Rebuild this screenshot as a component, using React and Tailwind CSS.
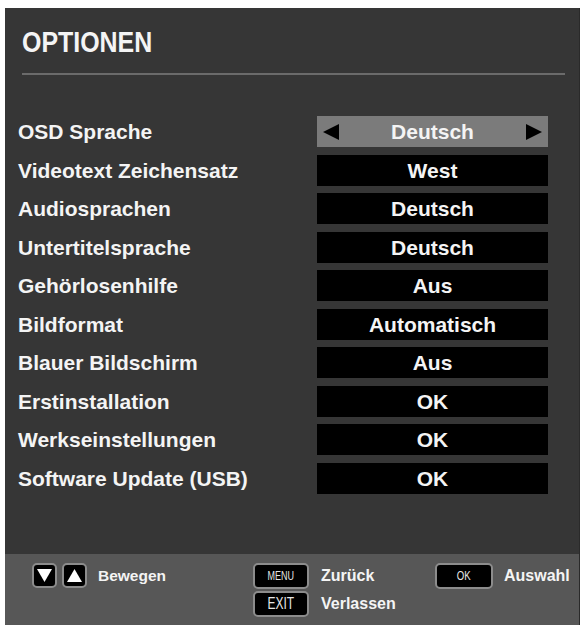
const rows = [
  ['OSD Sprache', 'Deutsch'],
  ['Videotext Zeichensatz', 'West'],
  ['Audiosprachen', 'Deutsch'],
  ['Untertitelsprache', 'Deutsch'],
  ['Gehörlosenhilfe', 'Aus'],
  ['Bildformat', 'Automatisch'],
  ['Blauer Bildschirm', 'Aus'],
  ['Erstinstallation', 'OK'],
  ['Werkseinstellungen', 'OK'],
  ['Software Update (USB)', 'OK'],
]

function Tri({ dir, className }) {
  const pts = {
    left: '16,0 16,16 0,8',
    right: '0,0 16,8 0,16',
    up: '8,1 16,15 0,15',
    down: '0,1 16,1 8,15',
  }[dir]
  return (
    <svg viewBox="0 0 16 16" className={className}>
      <polygon points={pts} fill="currentColor" />
    </svg>
  )
}

function Key({ children, className = '' }) {
  return (
    <div className={`flex items-center justify-center bg-black border-2 border-[#8c8c8c] rounded-[5px] text-[#e6e6e6] ${className}`}>
      {children}
    </div>
  )
}

export default function App() {
  return (
    <div className="w-[584px] h-[629px] bg-white pt-[8px] pl-[5px]" style={{ fontFamily: '"Liberation Sans", Arial, sans-serif' }}>
      <div className="w-[575px] h-[617px] flex flex-col border-r border-[#2a2a2a]">
        {/* Menu body */}
        <div className="flex-1 bg-[#363636] flex flex-col">
          <h1 className="mt-[20px] ml-[17px] text-[29px] leading-[29px] font-bold text-[#f4f4f4]">
            <span className="inline-block origin-left scale-x-[0.86]">OPTIONEN</span>
          </h1>
          <div className="mt-[16px] ml-[17px] mr-[14px] h-[2px] bg-[#6b6b6b]" />

          <div className="mt-[41px] flex flex-col gap-[7.5px] pl-[13px]">
            {rows.map(([label, value], i) => (
              <div key={label} className="flex items-center h-[31px]">
                <div className="w-[299px] text-[21px] leading-[31px] font-bold text-[#f4f4f4]">{label}</div>
                <div
                  className={`w-[231px] h-[31px] flex items-center justify-between px-[6px] text-[21px] font-bold text-[#f4f4f4] ${
                    i === 0 ? 'bg-[#7b7b7b]' : 'bg-black'
                  }`}
                >
                  {i === 0 ? <Tri dir="left" className="w-[16px] h-[16px] text-black" /> : <span className="w-[16px]" />}
                  <span className="leading-[31px]">{value}</span>
                  {i === 0 ? <Tri dir="right" className="w-[16px] h-[16px] text-black" /> : <span className="w-[16px]" />}
                </div>
              </div>
            ))}
          </div>
        </div>

        {/* Footer help */}
        <div className="h-[71px] bg-[#575757] flex pt-[9px] pl-[27px] font-bold text-[#f4f4f4]">
          <div className="w-[221px] flex items-start">
            <div className="flex items-center gap-[5px]">
              <Key className="w-[25px] h-[25px]">
                <Tri dir="down" className="w-[15px] h-[15px] text-white" />
              </Key>
              <Key className="w-[25px] h-[25px]">
                <Tri dir="up" className="w-[15px] h-[15px] text-white" />
              </Key>
            </div>
            <span className="ml-[11px] leading-[25px] text-[15.5px]">Bewegen</span>
          </div>

          <div className="w-[182px] flex flex-col gap-[2px]">
            <div className="flex items-center">
              <Key className="w-[56px] h-[26px] text-[12px] font-normal">
                <span className="inline-block scale-x-[0.75]">MENU</span>
              </Key>
              <span className="ml-[12px] leading-[26px] text-[16px]">Zurück</span>
            </div>
            <div className="flex items-center">
              <Key className="w-[56px] h-[26px] text-[16px] font-normal">
                <span className="inline-block scale-x-[0.75]">EXIT</span>
              </Key>
              <span className="ml-[12px] leading-[26px] text-[16px]">Verlassen</span>
            </div>
          </div>

          <div className="flex items-start">
            <Key className="w-[58px] h-[26px] text-[12px] font-normal">
              <span className="inline-block scale-x-[0.8]">OK</span>
            </Key>
            <span className="ml-[11px] leading-[26px] text-[16px]">Auswahl</span>
          </div>
        </div>
      </div>
    </div>
  )
}
